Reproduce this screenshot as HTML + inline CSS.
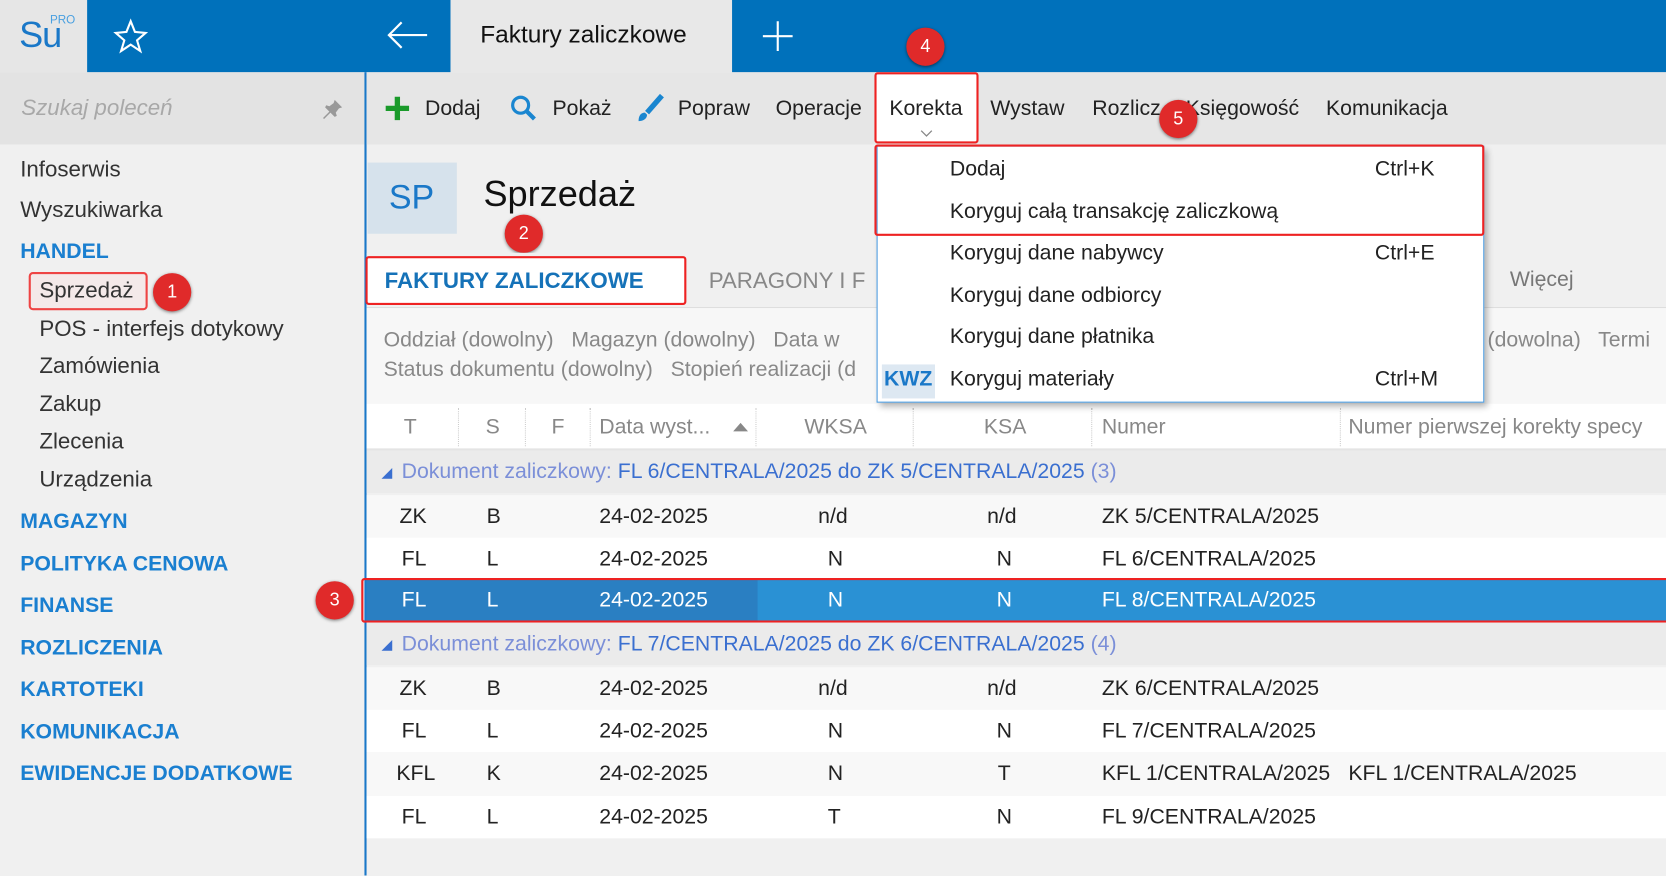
<!DOCTYPE html>
<html><head><meta charset="utf-8"><style>
*{margin:0;padding:0;box-sizing:border-box}
html,body{width:1666px;height:875px;overflow:hidden;background:#f0f0f0}
#w{position:absolute;left:0;top:0;width:1568px;height:824px;transform:scale(1.0625);transform-origin:0 0;font-family:"Liberation Sans",sans-serif;color:#222;background:#f0f0f0}
.a{position:absolute;white-space:nowrap}
.t{font-size:20px}
.b{background:#0071bb}
.badge{position:absolute;width:36px;height:36px;border-radius:50%;background:#e02a2a;color:#fff;font-size:17px;text-align:center;line-height:36px;box-shadow:0 1px 3px rgba(0,0,0,.5)}
.nav{color:#1a7fd0;font-weight:bold;font-size:20px}
.sub{color:#333;font-size:21px}
.hd{color:#888;font-size:20px}
.row{position:absolute;left:345px;width:1223px;height:40px;font-size:20px}
.row span{position:absolute;top:9px}
.grp{background:#ebebeb;color:#3a6fd0}
.sep{position:absolute;top:384px;height:36px;border-left:1px dotted #ccc}
</style></head><body><div id="w">
<div class="a" style="left:0;top:0;width:82px;height:68px;background:#e6e6e6"></div>
<div class="a" style="left:18px;top:14px;font-size:34px;color:#1a78c8;letter-spacing:-1px">Su</div>
<div class="a" style="left:47px;top:13px;font-size:11px;color:#4aa0e0">PRO</div>
<div class="a b" style="left:82px;top:0;width:342px;height:68px"></div>
<svg class="a" style="left:106px;top:17px" width="34" height="34" viewBox="0 0 34 34"><path d="M17 3l4 10 10 1-8 7 3 10-9-6-9 6 3-10-8-7 10-1z" fill="none" stroke="#fff" stroke-width="2"/></svg>
<svg class="a" style="left:362px;top:18px" width="42" height="30"><path d="M40 15H4M16 3L4 15l12 12" fill="none" stroke="#fff" stroke-width="2"/></svg>
<div class="a" style="left:424px;top:0;width:265px;height:68px;background:#e8e8e8"></div>
<div class="a" style="left:452px;top:19px;font-size:23px;color:#111">Faktury zaliczkowe</div>
<div class="a b" style="left:689px;top:0;width:879px;height:68px"></div>
<svg class="a" style="left:716px;top:18px" width="32" height="32"><path d="M16 2v28M2 16h28" stroke="#fff" stroke-width="2"/></svg>
<div class="a" style="left:0;top:68px;width:343px;height:68px;background:#e3e3e3"></div>
<div class="a" style="left:20px;top:90px;font-size:21px;font-style:italic;color:#a8a8a8">Szukaj poleceń</div>
<svg class="a" style="left:302px;top:92px" width="22" height="22"><path d="M13 2l7 7-3 1-3 4 1 3-2 1-4-4-6 6-1-1 6-6-4-4 1-2 3 1 4-3z" fill="#999"/></svg>
<div class="a" style="left:343px;top:68px;width:2px;height:756px;background:#1a78c8"></div>
<div class="a sub" style="left:19px;top:148px">Infoserwis</div>
<div class="a sub" style="left:19px;top:186px">Wyszukiwarka</div>
<div class="a nav" style="left:19px;top:226px">HANDEL</div>
<div class="a" style="left:27px;top:256px;width:112px;height:36px;border:2px solid #e44;border-radius:4px;background:#f4e9e9"></div>
<div class="a sub" style="left:37px;top:262px">Sprzedaż</div>
<div class="a sub" style="left:37px;top:298px">POS - interfejs dotykowy</div>
<div class="a sub" style="left:37px;top:333px">Zamówienia</div>
<div class="a sub" style="left:37px;top:369px">Zakup</div>
<div class="a sub" style="left:37px;top:404px">Zlecenia</div>
<div class="a sub" style="left:37px;top:440px">Urządzenia</div>
<div class="a nav" style="left:19px;top:480px">MAGAZYN</div>
<div class="a nav" style="left:19px;top:520px">POLITYKA CENOWA</div>
<div class="a nav" style="left:19px;top:559px">FINANSE</div>
<div class="a nav" style="left:19px;top:599px">ROZLICZENIA</div>
<div class="a nav" style="left:19px;top:638px">KARTOTEKI</div>
<div class="a nav" style="left:19px;top:678px">KOMUNIKACJA</div>
<div class="a nav" style="left:19px;top:717px">EWIDENCJE DODATKOWE</div>
<div class="badge" style="left:144px;top:257px">1</div>
<div class="a" style="left:345px;top:68px;width:1223px;height:68px;background:#e6e6e6"></div>
<svg class="a" style="left:362px;top:90px" width="24" height="24"><path d="M12 1v22M1 12h22" stroke="#1a9a2a" stroke-width="5"/></svg>
<div class="a t" style="left:400px;top:91px">Dodaj</div>
<svg class="a" style="left:480px;top:89px" width="26" height="26"><circle cx="10" cy="10" r="7.5" fill="none" stroke="#1a86d0" stroke-width="3"/><path d="M15 15l8 8" stroke="#1a86d0" stroke-width="4"/></svg>
<div class="a t" style="left:520px;top:91px">Pokaż</div>
<svg class="a" style="left:597px;top:88px" width="28" height="28"><path d="M26 2L12 18" stroke="#1a86d0" stroke-width="5"/><path d="M10 18c-4 0-6 3-6 8 4 0 8-2 8-6z" fill="#1a86d0"/></svg>
<div class="a t" style="left:638px;top:91px">Popraw</div>
<div class="a t" style="left:730px;top:91px">Operacje</div>
<div class="a" style="left:823px;top:68px;width:98px;height:67px;background:#fff;border:2px solid #e22;border-radius:3px"></div>
<div class="a t" style="left:837px;top:91px">Korekta</div>
<svg class="a" style="left:866px;top:122px" width="12" height="8"><path d="M1 1l5 5 5-5" fill="none" stroke="#888" stroke-width="1.2"/></svg>
<div class="a t" style="left:932px;top:91px">Wystaw</div>
<div class="a t" style="left:1028px;top:91px">Rozlicz</div>
<div class="a t" style="left:1116px;top:91px">Księgowość</div>
<div class="a t" style="left:1248px;top:91px">Komunikacja</div>
<div class="a" style="left:346px;top:153px;width:84px;height:67px;background:#d6e2ec"></div>
<div class="a" style="left:366px;top:167px;font-size:32px;color:#1a78c8">SP</div>
<div class="a" style="left:455px;top:164px;font-size:34px;color:#111">Sprzedaż</div>
<div class="badge" style="left:475px;top:202px">2</div>
<div class="a" style="left:345px;top:238px;width:1223px;height:52px;background:#f0f0f0;border-bottom:1px solid #ddd"></div>
<div class="a" style="left:344px;top:241px;width:302px;height:46px;background:#fff;border:2px solid #e22;border-radius:3px"></div>
<div class="a" style="left:362px;top:253px;font-size:21px;font-weight:bold;color:#1572b8">FAKTURY ZALICZKOWE</div>
<div class="a" style="left:667px;top:253px;font-size:21px;color:#888">PARAGONY I F</div>
<div class="a" style="left:1421px;top:252px;font-size:20px;color:#777">Więcej</div>
<div class="a" style="left:345px;top:290px;width:1223px;height:90px;background:#f7f7f7"></div>
<div class="a hd" style="left:361px;top:309px">Oddział (dowolny)&nbsp;&nbsp; Magazyn (dowolny)&nbsp;&nbsp; Data w</div>
<div class="a hd" style="left:361px;top:337px">Status dokumentu (dowolny)&nbsp;&nbsp; Stopień realizacji (d</div>
<div class="a hd" style="left:1400px;top:309px">(dowolna)&nbsp;&nbsp; Termi</div>
<div class="a" style="left:345px;top:380px;width:1223px;height:44px;background:#fff;border-bottom:2px solid #e4e4e4"></div>
<div class="sep" style="left:431px"></div><div class="sep" style="left:494px"></div><div class="sep" style="left:555px"></div><div class="sep" style="left:711px"></div><div class="sep" style="left:859px"></div><div class="sep" style="left:1027px"></div><div class="sep" style="left:1261px"></div>
<div class="a hd" style="left:380px;top:391px">T</div>
<div class="a hd" style="left:457px;top:391px">S</div>
<div class="a hd" style="left:519px;top:391px">F</div>
<div class="a hd" style="left:564px;top:391px">Data wyst...</div>
<svg class="a" style="left:690px;top:397px" width="14" height="10"><path d="M0 9L7 1l7 8z" fill="#888"/></svg>
<div class="a hd" style="left:757px;top:391px">WKSA</div>
<div class="a hd" style="left:926px;top:391px">KSA</div>
<div class="a hd" style="left:1037px;top:391px">Numer</div>
<div class="a hd" style="left:1269px;top:391px">Numer pierwszej korekty specy</div>
<div class="row grp" style="top:424px"><span style="left:14px;font-size:13px;top:13px">◢</span><span style="left:33px"><span style="position:static;color:#7b8fd8">Dokument zaliczkowy:</span> FL 6/CENTRALA/2025 do ZK 5/CENTRALA/2025 <span style="position:static;color:#7b8fd8">(3)</span></span></div>
<div class="row" style="top:466px;background:#f8f8f8"><span style="left:31px">ZK</span><span style="left:113px">B</span><span style="left:219px">24-02-2025</span><span style="left:425px">n/d</span><span style="left:584px">n/d</span><span style="left:692px">ZK 5/CENTRALA/2025</span></div>
<div class="row" style="top:506px;background:#fff"><span style="left:33px">FL</span><span style="left:113px">L</span><span style="left:219px">24-02-2025</span><span style="left:434px">N</span><span style="left:593px">N</span><span style="left:692px">FL 6/CENTRALA/2025</span></div>
<div class="row" style="top:545px;background:#2a91d4;color:#fff"><div style="position:absolute;left:0;top:0;width:368px;height:40px;background:#2a7fc2"></div><span style="left:33px">FL</span><span style="left:113px">L</span><span style="left:219px">24-02-2025</span><span style="left:434px">N</span><span style="left:593px">N</span><span style="left:692px">FL 8/CENTRALA/2025</span></div>
<div class="a" style="left:340px;top:544px;width:1240px;height:42px;border:2px solid #e22;border-radius:3px"></div>
<div class="badge" style="left:297px;top:547px">3</div>
<div class="row grp" style="top:586px"><span style="left:14px;font-size:13px;top:13px">◢</span><span style="left:33px"><span style="position:static;color:#7b8fd8">Dokument zaliczkowy:</span> FL 7/CENTRALA/2025 do ZK 6/CENTRALA/2025 <span style="position:static;color:#7b8fd8">(4)</span></span></div>
<div class="row" style="top:628px;background:#f8f8f8"><span style="left:31px">ZK</span><span style="left:113px">B</span><span style="left:219px">24-02-2025</span><span style="left:425px">n/d</span><span style="left:584px">n/d</span><span style="left:692px">ZK 6/CENTRALA/2025</span></div>
<div class="row" style="top:668px;background:#fff"><span style="left:33px">FL</span><span style="left:113px">L</span><span style="left:219px">24-02-2025</span><span style="left:434px">N</span><span style="left:593px">N</span><span style="left:692px">FL 7/CENTRALA/2025</span></div>
<div class="row" style="top:708px;background:#f8f8f8;height:41px"><span style="left:28px">KFL</span><span style="left:113px">K</span><span style="left:219px">24-02-2025</span><span style="left:434px">N</span><span style="left:594px">T</span><span style="left:692px">KFL 1/CENTRALA/2025</span><span style="left:924px">KFL 1/CENTRALA/2025</span></div>
<div class="row" style="top:749px;background:#fff"><span style="left:33px">FL</span><span style="left:113px">L</span><span style="left:219px">24-02-2025</span><span style="left:434px">T</span><span style="left:593px">N</span><span style="left:692px">FL 9/CENTRALA/2025</span></div>
<div class="a" style="left:825px;top:137px;width:572px;height:242px;background:#fff;border:1px solid #4a9be0;box-shadow:3px 4px 6px rgba(0,0,0,.3)"></div>
<div class="a" style="left:823px;top:136px;width:574px;height:86px;border:2px solid #e22;border-radius:3px"></div>
<div class="a t" style="left:894px;top:148px">Dodaj</div><div class="a t" style="left:1294px;top:148px">Ctrl+K</div>
<div class="a t" style="left:894px;top:188px">Koryguj całą transakcję zaliczkową</div>
<div class="a t" style="left:894px;top:227px">Koryguj dane nabywcy</div><div class="a t" style="left:1294px;top:227px">Ctrl+E</div>
<div class="a t" style="left:894px;top:267px">Koryguj dane odbiorcy</div>
<div class="a t" style="left:894px;top:306px">Koryguj dane płatnika</div>
<div class="a" style="left:830px;top:343px;width:50px;height:32px;background:#dde8f2"></div>
<div class="a" style="left:832px;top:346px;font-size:20px;font-weight:bold;color:#1a78c8">KWZ</div>
<div class="a t" style="left:894px;top:346px">Koryguj materiały</div><div class="a t" style="left:1294px;top:346px">Ctrl+M</div>
<div class="badge" style="left:853px;top:26px">4</div>
<div class="badge" style="left:1091px;top:94px">5</div>
</div></body></html>
